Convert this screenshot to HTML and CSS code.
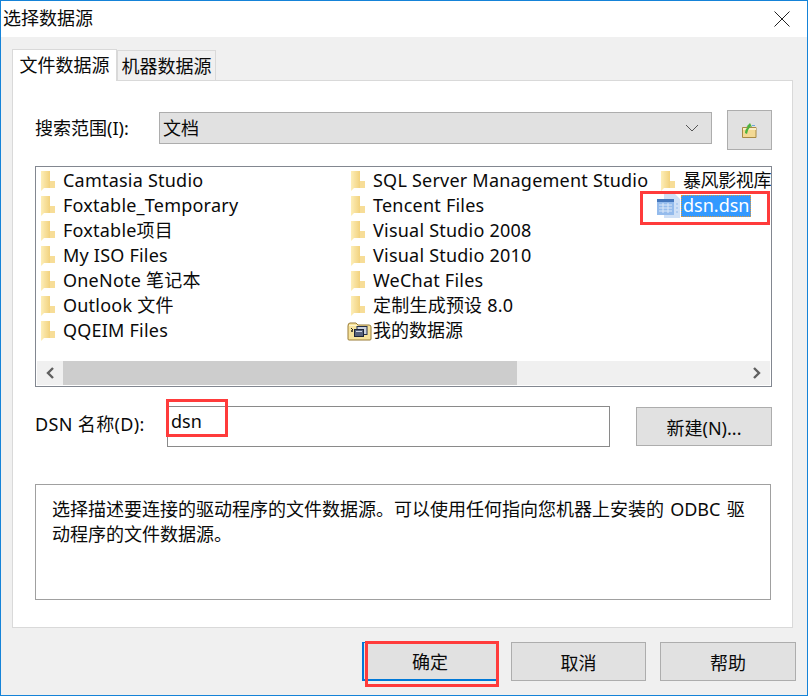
FILE: index.html
```html
<!DOCTYPE html>
<html lang="zh-CN">
<head>
<meta charset="utf-8">
<title>选择数据源</title>
<link rel="stylesheet" href="styles.css">
</head>
<body>
<svg class="defs" width="0" height="0" aria-hidden="true">
  <defs>
    <linearGradient id="fg" x1="0" y1="0" x2="1" y2="0">
      <stop offset="0" stop-color="#fdeeb8"/>
      <stop offset="1" stop-color="#f2d27e"/>
    </linearGradient>
    <symbol id="folder" viewBox="0 0 14 20">
      <path d="M0 0h9v17H3l-3 3z" fill="url(#fg)"/>
      <path d="M9 10h5v7H9z" fill="#f7dd97"/>
      <path d="M3 1h1v16H3z" fill="#f8e2a2"/>
    </symbol>
  </defs>
</svg>
<div class="dialog">
  <header class="titlebar">
    <span class="title">选择数据源</span>
    <svg class="close" width="16" height="16" viewBox="0 0 16 16"><path d="M.5.5l15 15M15.5.5l-15 15" stroke="#222" fill="none"/></svg>
  </header>
  <main class="body">
    <nav class="tabs">
      <span class="tab active">文件数据源</span>
      <span class="tab">机器数据源</span>
    </nav>
    <section class="panel">
      <div class="row-look">
        <label class="label look-label">搜索范围(I):</label>
        <div class="combo"><span>文档</span>
          <svg width="14" height="8" viewBox="0 0 14 8"><path d="M1 1l6 6 6-6" stroke="#555" fill="none"/></svg>
        </div>
        <button class="btn up-btn" aria-label="上移">
          <svg width="15" height="16" viewBox="0 0 15 16">
            <path d="M.5 5.5h13.500v10H.5z" fill="#f3d994" stroke="#a88a45"/>
            <path d="M1 6h13v2H1z" fill="#fbeec6"/>
            <path d="M3 11Q3 7 6 5L4.500 4.500 8 1l2 4-1.500-.5Q6 7 5 12z" fill="#4db33d"/>
            <path d="M10 3h3v1h-3z" fill="#6fa8dc"/>
          </svg>
        </button>
      </div>
      <div class="list">
        <div class="files">
          <div class="item"><svg class="ico"><use href="#folder"/></svg>Camtasia Studio</div>
          <div class="item"><svg class="ico"><use href="#folder"/></svg>Foxtable_Temporary</div>
          <div class="item"><svg class="ico"><use href="#folder"/></svg>Foxtable项目</div>
          <div class="item"><svg class="ico"><use href="#folder"/></svg>My ISO Files</div>
          <div class="item"><svg class="ico"><use href="#folder"/></svg>OneNote 笔记本</div>
          <div class="item"><svg class="ico"><use href="#folder"/></svg>Outlook 文件</div>
          <div class="item"><svg class="ico"><use href="#folder"/></svg>QQEIM Files</div>
          <div class="item"><svg class="ico"><use href="#folder"/></svg>SQL Server Management Studio</div>
          <div class="item"><svg class="ico"><use href="#folder"/></svg>Tencent Files</div>
          <div class="item"><svg class="ico"><use href="#folder"/></svg>Visual Studio 2008</div>
          <div class="item"><svg class="ico"><use href="#folder"/></svg>Visual Studio 2010</div>
          <div class="item"><svg class="ico"><use href="#folder"/></svg>WeChat Files</div>
          <div class="item"><svg class="ico"><use href="#folder"/></svg>定制生成预设 8.0</div>
          <div class="item special">
            <svg class="ico-special" width="25" height="20" viewBox="0 0 25 20">
              <path d="M1 5q0-3 2-3h6l2 2h11q2 0 2 2v12q0 1-1 1H2q-1 0-1-1z" fill="#f7e39c" stroke="#9a7d38"/>
              <path d="M2 4h8v1H2z" fill="#fdf4cf"/>
              <path d="M4 7l2 2M4 10h2M5 9v2" stroke="#222"/>
              <rect x="10" y="5.500" width="10" height="8" fill="#c9d0de" stroke="#26304a"/>
              <rect x="7.500" y="8.500" width="9" height="7" fill="#56617c" stroke="#1d2438"/>
              <path d="M9 10.500h6" stroke="#cfd6e4"/>
            </svg>我的数据源</div>
          <div class="item fit"><svg class="ico"><use href="#folder"/></svg>暴风影视库</div>
          <div class="item selected">
            <svg class="ico-file" width="24" height="24" viewBox="0 0 24 24">
              <path d="M7 0h11l5 5v19H7z" fill="#cfe0f6"/>
              <rect x="0" y="5" width="17" height="16" fill="#94bbec"/>
              <path d="M0 5h17v3H0z" fill="#4477bd"/>
              <path d="M2 11h13M2 14h13M2 17h13M6 9v10M11 9v10" stroke="#dbe8f8"/>
              <path d="M19 10h2M19 14h2M19 18h2" stroke="#94bbec"/>
            </svg><span class="sel-text">dsn.dsn</span></div>
        </div>
        <div class="scrollbar">
          <span class="arrow"><svg width="10" height="12" viewBox="0 0 10 12"><path d="M8 1L3 6l5 5" stroke="#606060" stroke-width="2.4" fill="none"/></svg></span>
          <div class="track"><div class="thumb"></div></div>
          <span class="arrow"><svg width="10" height="12" viewBox="0 0 10 12"><path d="M2 1l5 5-5 5" stroke="#606060" stroke-width="2.4" fill="none"/></svg></span>
        </div>
      </div>
      <div class="row-dsn">
        <label class="label dsn-label">DSN 名称(D):</label>
        <div class="input">dsn</div>
        <button class="btn new-btn">新建(N)...</button>
      </div>
      <p class="desc">选择描述要连接的驱动程序的文件数据源。可以使用任何指向您机器上安装的 ODBC 驱动程序的文件数据源。</p>
    </section>
    <footer class="actions">
      <button class="btn act default">确定</button>
      <button class="btn act">取消</button>
      <button class="btn act">帮助</button>
    </footer>
  </main>
  <div class="mark mark-file"></div>
  <div class="mark mark-dsn"></div>
  <div class="mark mark-ok"></div>
</div>
</body>
</html>
```

FILE: styles.css
```css
* { box-sizing: border-box; }
html, body { margin: 0; padding: 0; }
body {
  width: 808px;
  height: 696px;
  overflow: hidden;
  font-family: "Noto Sans", "Noto Sans CJK SC", sans-serif;
  font-size: 18px;
  color: #0a0a0a;
}
.defs { position: absolute; }
.dialog {
  position: relative;
  width: 808px;
  height: 696px;
  display: flex;
  flex-direction: column;
  border: 1px solid #1583d8;
  background: #f0f0f0;
}
.titlebar {
  height: 36px;
  flex: none;
  background: #fff;
  display: flex;
  align-items: center;
  justify-content: space-between;
  padding: 0 17px 0 2px;
}
.title { line-height: 24px; margin-top: -3px; }
.close { margin-top: 0; }
.body {
  flex: 1;
  padding: 12px 14px 0 11px;
  display: flex;
  flex-direction: column;
}
.tabs { display: flex; align-items: flex-end; height: 32px; flex: none; position: relative; z-index: 1; }
.tab {
  height: 30px;
  width: 99px;
  background: #f0f0f0;
  border: 1px solid #d9d9d9;
  border-bottom: 0;
  display: flex;
  align-items: center;
  justify-content: center;
  padding-top: 1px;
  line-height: 24px;
  margin-bottom: 1px;
}
.tab.active {
  height: 32px;
  width: 105px;
  background: #fff;
  margin-bottom: 0;
  padding-bottom: 3px;
}
.panel {
  height: 548px;
  flex: none;
  background: #fff;
  border: 1px solid #d9d9d9;
  margin-top: -1px;
  padding: 29px 20px 0 22px;
  display: flex;
  flex-direction: column;
}
.row-look { display: flex; align-items: flex-start; height: 56px; flex: none; }
.label { line-height: 24px; white-space: nowrap; }
.look-label { width: 124px; margin-top: 6px; }
.combo {
  width: 553px;
  height: 32px;
  margin-top: 2px;
  background: #e1e1e1;
  border: 1px solid #adadad;
  display: flex;
  align-items: center;
  justify-content: space-between;
  padding: 0 12px 0 3px;
  line-height: 24px;
}
.btn {
  font: inherit;
  color: inherit;
  background: #e1e1e1;
  border: 1px solid #adadad;
  padding: 0;
  display: flex;
  align-items: center;
  justify-content: center;
}
.up-btn { width: 45px; height: 40px; margin-left: 15px; }
.list {
  width: 737px;
  height: 221px;
  flex: none;
  border: 1px solid #828790;
  display: flex;
  flex-direction: column;
}
.files {
  flex: 1;
  min-height: 0;
  display: grid;
  grid-auto-flow: column;
  grid-template-rows: repeat(7, 25px);
  grid-template-columns: 310px 310px 1fr;
  grid-auto-rows: 25px;
  padding: 1px 0 0 5px;
  overflow: hidden;
  white-space: nowrap;
  letter-spacing: .22px;
}
.item { display: flex; align-items: center; height: 25px; line-height: 25px; }
.ico { width: 14px; height: 20px; margin-right: 8px; flex: none; }
.special { margin-left: -4px; letter-spacing: 0; }
.fit { letter-spacing: -.4px; }
.ico-special { flex: none; margin-right: 1px; }
.ico-file { flex: none; }
.selected { margin-left: -4px; letter-spacing: 0; }
.sel-text {
  background: #3399ff;
  color: #fff;
  height: 22px;
  line-height: 21px;
  padding: 0 2px;
  outline: 1px dotted #e09a3c;
  outline-offset: -1px;
}
.scrollbar {
  height: 24px;
  flex: none;
  margin: 0 1px 1px;
  background: #f0f0f0;
  display: flex;
  align-items: center;
}
.arrow { width: 26px; flex: none; display: flex; justify-content: center; }
.track { flex: 1; height: 24px; min-width: 0; }
.thumb { width: 454px; height: 24px; background: #cdcdcd; }
.row-dsn { display: flex; align-items: flex-start; height: 97px; flex: none; padding-top: 19px; }
.dsn-label { width: 132px; margin-top: 6px; letter-spacing: .35px; }
.input {
  width: 443px;
  height: 41px;
  border: 1px solid #8a8a8a;
  padding: 0 3px;
  line-height: 28px;
}
.new-btn { width: 136px; height: 39px; margin-left: 26px; margin-top: 1px; }
.desc {
  margin: 0;
  width: 736px;
  height: 116px;
  flex: none;
  border: 1px solid #a0a0a0;
  padding: 12px 16px 0;
  line-height: 25px;
  word-spacing: 1.5px;
}
.actions {
  display: flex;
  justify-content: flex-end;
  gap: 14px;
  padding-top: 14px;
  margin-right: -3px;
  flex: none;
}
.act { width: 135px; height: 39px; }
.act:last-child { width: 136px; }
.default { border: 1px solid #0078d7; border-left-width: 2px; border-bottom-width: 2px; }
.mark { position: absolute; border: 3px solid #ff3b3b; pointer-events: none; }
.mark-file { left: 639px; top: 190px; width: 130px; height: 34px; }
.mark-dsn { left: 165px; top: 398px; width: 62px; height: 38px; }
.mark-ok { left: 364px; top: 640px; width: 134px; height: 46px; }
```
